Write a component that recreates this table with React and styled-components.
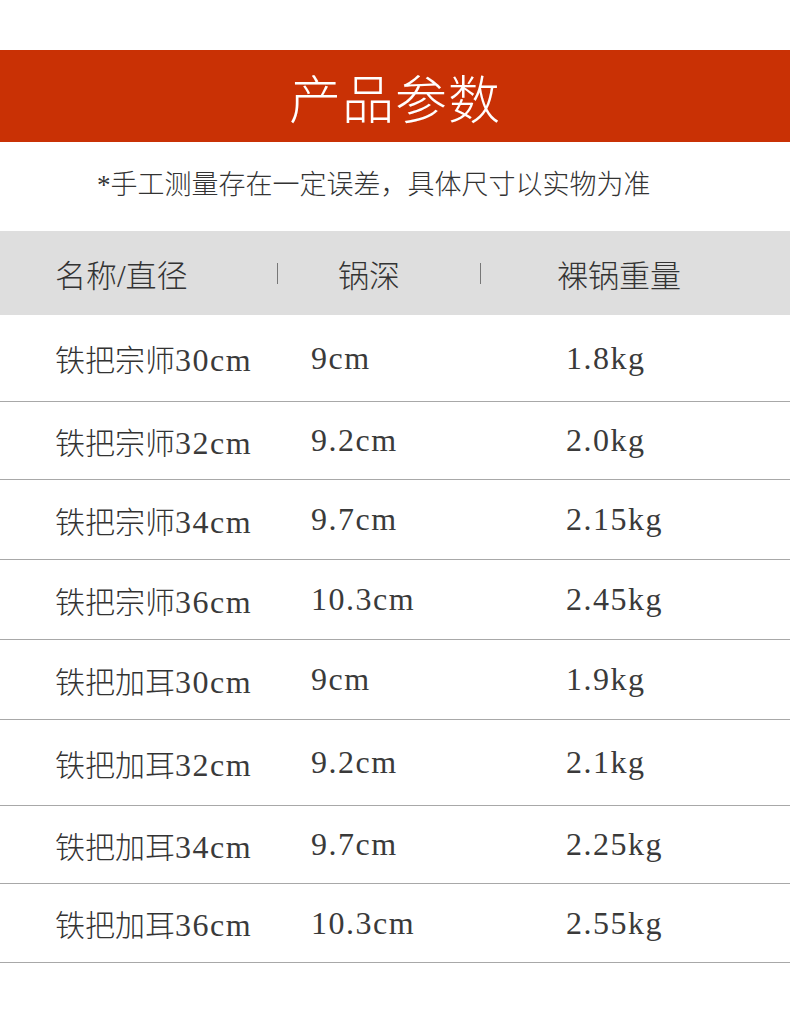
import React from "react";
import styled, { createGlobalStyle } from "styled-components";

const GlobalStyle = createGlobalStyle`
  body {
    margin: 0;
    background: #fff;
    font-family: "Liberation Serif", "Noto Sans CJK SC", serif;
    color: #333;
  }
`;

const Page = styled.div`
  width: 790px;
  padding-top: 50px;
`;

const Banner = styled.div`
  height: 92px;
  background: #c93105;
  display: flex;
  align-items: center;
  justify-content: center;
  color: #fff;
  font-size: 52px;
  font-weight: 300;
  letter-spacing: 1px;
`;

const Note = styled.div`
  height: 89px;
  box-sizing: border-box;
  padding: 0 0 9px 97px;
  display: flex;
  align-items: center;
  font-size: 27px;
  font-weight: 300;
  color: #333;
`;

const HeaderRow = styled.div`
  height: 84px;
  background: #dedede;
  display: flex;
  align-items: center;
  font-size: 31px;
  font-weight: 300;
  color: #333;
`;

const HeadCell = styled.div`
  width: ${(p) => p.w}px;
  padding-left: ${(p) => p.pl}px;
  box-sizing: border-box;
`;

const Divider = styled.span`
  width: 1px;
  height: 21px;
  background: #777;
`;

const Row = styled.div`
  height: ${(p) => p.h}px;
  box-sizing: border-box;
  border-bottom: 1px solid #a8a8a8;
  display: flex;
  align-items: center;
  font-size: 30px;
  font-weight: 300;
  color: #333;
`;

const Cell = styled.div`
  width: ${(p) => p.w}px;
  padding-left: ${(p) => p.pl || 0}px;
  box-sizing: border-box;
  white-space: nowrap;
`;

const Latin = styled.span`
  font-size: 32px;
  letter-spacing: 1.5px;
  color: #3a3a3a;
`;

// wrap latin runs so they get the wider look of the original serif
const Mixed = ({ text }) =>
  text
    .split(/([0-9A-Za-z.]+)/)
    .filter(Boolean)
    .map((part, i) =>
      /[0-9A-Za-z]/.test(part) ? <Latin key={i}>{part}</Latin> : <span key={i}>{part}</span>
    );

const rows = [
  { name: "铁把宗师30cm", depth: "9cm", weight: "1.8kg", h: 87 },
  { name: "铁把宗师32cm", depth: "9.2cm", weight: "2.0kg", h: 78 },
  { name: "铁把宗师34cm", depth: "9.7cm", weight: "2.15kg", h: 80 },
  { name: "铁把宗师36cm", depth: "10.3cm", weight: "2.45kg", h: 80 },
  { name: "铁把加耳30cm", depth: "9cm", weight: "1.9kg", h: 80 },
  { name: "铁把加耳32cm", depth: "9.2cm", weight: "2.1kg", h: 86 },
  { name: "铁把加耳34cm", depth: "9.7cm", weight: "2.25kg", h: 78 },
  { name: "铁把加耳36cm", depth: "10.3cm", weight: "2.55kg", h: 79 },
];

export default function App() {
  return (
    <Page>
      <GlobalStyle />
      <Banner>产品参数</Banner>
      <Note>*手工测量存在一定误差，具体尺寸以实物为准</Note>
      <HeaderRow>
        <HeadCell w={277} pl={55}>名称/直径</HeadCell>
        <Divider />
        <HeadCell w={202} pl={60}>锅深</HeadCell>
        <Divider />
        <HeadCell w={300} pl={76}>裸锅重量</HeadCell>
      </HeaderRow>
      {rows.map((r) => (
        <Row key={r.name} h={r.h}>
          <Cell w={311} pl={55}><Mixed text={r.name} /></Cell>
          <Cell w={255}><Mixed text={r.depth} /></Cell>
          <Cell w={224}><Mixed text={r.weight} /></Cell>
        </Row>
      ))}
    </Page>
  );
}
